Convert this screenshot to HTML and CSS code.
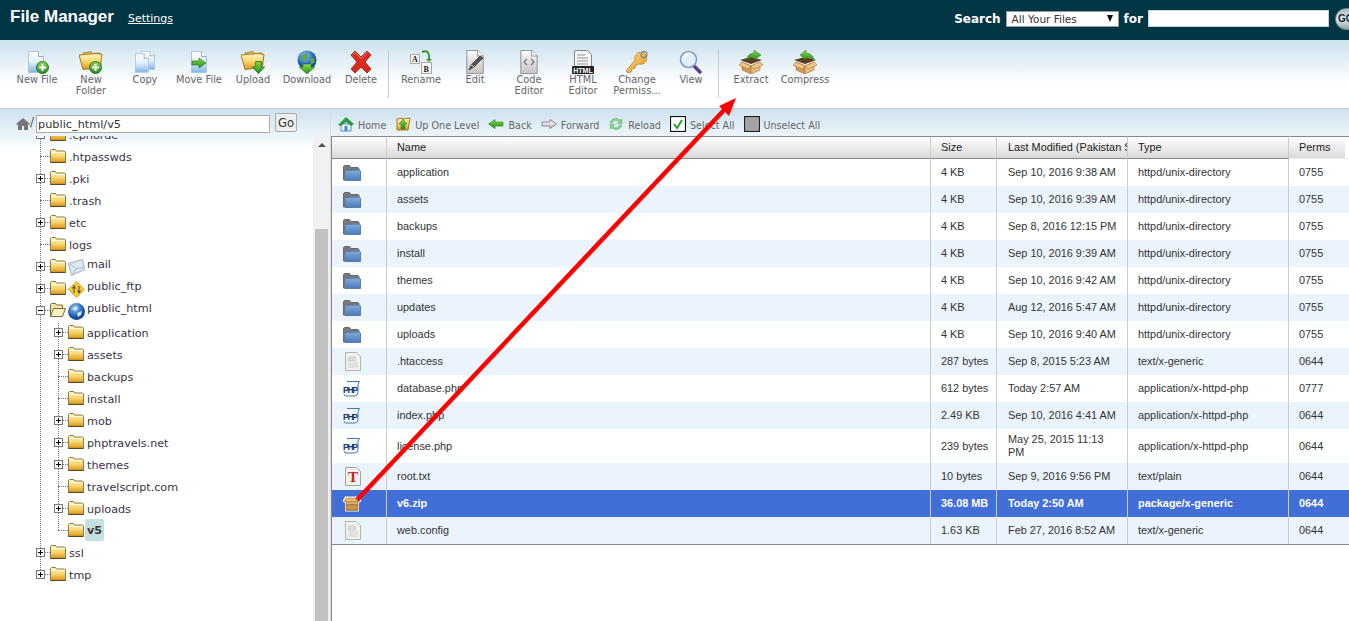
FILE: index.html
```html
<!DOCTYPE html>
<html lang="en">

<head>
    <meta charset="UTF-8">
    <meta name="viewport" content="width=device-width, initial-scale=1.0">
    <title>File Manager</title>
    <link rel="stylesheet" href="styles.css">
</head>

<body>
    <!-- icon sheet -->
    <svg class="defs" width="0" height="0">
        <defs>
            <linearGradient id="gFolder" x1="0" y1="0" x2="0" y2="1"><stop offset="0" stop-color="#fff6c4"/><stop offset=".5" stop-color="#fbd66e"/><stop offset="1" stop-color="#d9951c"/></linearGradient>
            <linearGradient id="gPage" x1="0" y1="0" x2="0" y2="1"><stop offset="0" stop-color="#fff"/><stop offset=".5" stop-color="#e4f0fb"/><stop offset="1" stop-color="#7db4e6"/></linearGradient>
            <linearGradient id="gGrey" x1="0" y1="0" x2="0" y2="1"><stop offset="0" stop-color="#fbfbfb"/><stop offset="1" stop-color="#c4c4c4"/></linearGradient>
            <linearGradient id="gGreen" x1="0" y1="0" x2="0" y2="1"><stop offset="0" stop-color="#8fdc4a"/><stop offset="1" stop-color="#1f8a1f"/></linearGradient>
            <linearGradient id="gBlue" x1="0" y1="0" x2="0" y2="1"><stop offset="0" stop-color="#83acdc"/><stop offset="1" stop-color="#4a7bb8"/></linearGradient>
            <radialGradient id="gGlobe" cx=".4" cy=".3" r=".8"><stop offset="0" stop-color="#9cc8f5"/><stop offset=".6" stop-color="#1f5cb0"/><stop offset="1" stop-color="#0f2f70"/></radialGradient>
            <linearGradient id="gBox" x1="0" y1="0" x2="0" y2="1"><stop offset="0" stop-color="#e8bc7c"/><stop offset="1" stop-color="#b9803c"/></linearGradient>
            <linearGradient id="gKey" x1="0" y1="0" x2="1" y2="1"><stop offset="0" stop-color="#ffe08a"/><stop offset="1" stop-color="#e0901c"/></linearGradient>
        </defs>
        <symbol id="folder" viewBox="0 0 16 14">
            <path d="M.5 13.500V1.500l1-1h4l1 1.500h8l1 1v10.500z" fill="url(#gFolder)" stroke="#8c7a4a"/>
            <path d="M1 3.500h14" stroke="#fff" stroke-opacity=".8"/>
            <path d="M.5 13.500h15" stroke="#5a4a20" stroke-width="1.200"/>
        </symbol>
        <symbol id="folder-open" viewBox="0 0 16 14">
            <path d="M.5 13.500V1.500l1-1h4l1 1.500h6v3" fill="#fbe8a8" stroke="#7a6a3a"/>
            <path d="M.5 13.500l3-8h12l-3 8z" fill="#fdf0c0" stroke="#7a6a3a"/>
        </symbol>
        <symbol id="page" viewBox="0 0 16 22">
            <path d="M.5.500h10l5 5v16H.5z" fill="url(#gPage)" stroke="#a9c4de"/>
            <path d="M10.500.500v5h5" fill="#fff" stroke="#9ab"/>
        </symbol>
        <symbol id="page-grey" viewBox="0 0 16 22">
            <path d="M.5.500h10l5 5v16H.5z" fill="url(#gGrey)" stroke="#999"/>
            <path d="M10.500.500v5h5" fill="#fff" stroke="#999"/>
        </symbol>
        <symbol id="plus-badge" viewBox="0 0 13 13">
            <circle cx="6.500" cy="6.500" r="6" fill="url(#gGreen)" stroke="#2d6b2d"/>
            <path d="M6.500 3v7M3 6.500h7" stroke="#fff" stroke-width="2"/>
        </symbol>
        <symbol id="big-folder" viewBox="0 0 24 20">
            <path d="M4 2l8-1.500 1 2 8-.5 1 12-15 3z" fill="#e9c25a" stroke="#a88a3a"/>
            <path d="M0 4l17-1.500 6 1-2 13-17 2z" fill="url(#gFolder)" stroke="#a07a24"/>
        </symbol>
        <symbol id="down-arrow" viewBox="0 0 14 14">
            <path d="M4 .5h6v6h3.500L7 13.500.5 6.500H4z" fill="url(#gGreen)" stroke="#2a7a1f"/>
        </symbol>
        <symbol id="box" viewBox="0 0 24 18">
            <path d="M1 4l11 4 11-4-11-3z" fill="#5e3c1c"/>
            <path d="M3 6l9 4v8l-9-4z" fill="#d19a55" stroke="#a87434" stroke-width=".6"/>
            <path d="M21 6l-9 4v8l9-4z" fill="#e8bc7c" stroke="#a87434" stroke-width=".6"/>
            <path d="M3 6L0 9l9 4 3-3zM21 6l3 3-9 4-3-3z" fill="#edc78c" stroke="#a87434" stroke-width=".6"/>
        </symbol>
        <symbol id="blue-folder" viewBox="0 0 18 16">
            <path d="M.5 15V1.500l1-1h5l1.500 2h7l1 1V15z" fill="#77797d" stroke="#66686c"/>
            <path d="M2 15.500V5.500l14-.500 1.500 1v9.500z" fill="url(#gBlue)" stroke="#5a7ea8"/>
        </symbol>
        <symbol id="doc" viewBox="0 0 16 19">
            <path d="M.5.500h11l4 4v14H.5z" fill="#f1f1ee" stroke="#b5b5b0"/>
            <path d="M3.500 5h7v4h-7zM3 11h10M3 13h10M3 15h10" fill="#dcdcd8" stroke="#cfcfca"/>
        </symbol>
        <symbol id="php-scroll" viewBox="0 0 17 16">
            <path d="M4 .500h12.500l-1.500 3v8q0 3-3 3.500H3q-2 0-2-2" fill="#f4f8fd" stroke="#3f78b8"/>
        </symbol>
    </svg>

    <header class="topbar">
        <h1 class="app-title">File Manager</h1>
        <a class="settings-link" href="#">Settings</a>
        <form class="search">
            <label class="search-label">Search</label>
            <div class="fake-select"><span>All Your Files</span><span class="select-arrow"></span></div>
            <label class="search-label for-label">for</label>
            <input class="search-input" type="text">
            <button class="go-round" type="button">GO</button>
        </form>
    </header>

    <nav class="toolbar">
        <a class="tool"><svg class="tool-icon" viewBox="0 0 24 24"><use href="#page" x="3" y="1" width="16" height="22"/><use href="#plus-badge" x="11" y="11" width="13" height="13"/></svg>New File</a>
        <a class="tool"><svg class="tool-icon" viewBox="0 0 24 24"><use href="#big-folder" x="0" y="1" width="24" height="20"/><use href="#plus-badge" x="10" y="11" width="13" height="13"/></svg>New Folder</a>
        <a class="tool"><svg class="tool-icon" viewBox="0 0 24 24"><use href="#page" x="8" y="1" width="14" height="19"/><use href="#page" x="2" y="3" width="14" height="20"/></svg>Copy</a>
        <a class="tool"><svg class="tool-icon" viewBox="0 0 24 24"><use href="#page" x="3" y="1" width="18" height="22"/><path d="M5 11h7V8l7 5-7 5v-3H5z" fill="url(#gGreen)" stroke="#2a7a1f" stroke-width=".7"/></svg>Move File</a>
        <a class="tool"><svg class="tool-icon" viewBox="0 0 24 24"><use href="#big-folder" x="0" y="1" width="24" height="20"/><use href="#down-arrow" x="11" y="11" width="13" height="13"/></svg>Upload</a>
        <a class="tool"><svg class="tool-icon" viewBox="0 0 24 24"><circle cx="12" cy="10" r="9.500" fill="url(#gGlobe)"/><path d="M6 6l5-3 3 3-2 4-4 1zM15 9l4-1 1 4-4 3z" fill="#58a850"/><path d="M8 14h8v3h4l-8 7-8-7h4z" fill="url(#gGreen)" stroke="#1f6a1f" stroke-width=".5"/></svg>Download</a>
        <a class="tool"><svg class="tool-icon" viewBox="0 0 24 24"><path d="M2 5l4-4 6 6 6-6 4 4-6 7 6 7-4 4-6-6-6 6-4-4 6-7z" fill="#dd2a1c" stroke="#8f2018" stroke-width=".8"/><path d="M3.500 5L6 2.500l6 6 6-6" fill="none" stroke="#f4857a"/></svg>Delete</a>
        <span class="tool-sep"></span>
        <a class="tool"><svg class="tool-icon" viewBox="0 0 24 24"><rect x="1.500" y="4.500" width="9" height="9" fill="#f6f6f6" stroke="#aaa"/><text x="3" y="12" class="card-text">A</text><rect x="12.500" y="12.500" width="10" height="11" fill="#f6f6f6" stroke="#aaa"/><text x="14.500" y="21.500" class="card-text">B</text><path d="M13 2c5-2 8 0 7 9" fill="none" stroke="#2f9a2f" stroke-width="2"/><path d="M17 9h6l-3 3z" fill="#2f9a2f"/></svg>Rename</a>
        <a class="tool"><svg class="tool-icon" viewBox="0 0 24 24"><use href="#page-grey" x="3" y="0" width="18" height="24"/><path d="M6 20l2-5L17 6l3 2-9 9z" fill="#555" stroke="#222" stroke-width=".6"/><path d="M8 15l3 2" stroke="#ddd"/></svg>Edit</a>
        <a class="tool"><svg class="tool-icon" viewBox="0 0 24 24"><use href="#page-grey" x="3" y="0" width="18" height="24"/><path d="M10 9l-3 3 3 3M14 9l3 3-3 3" fill="none" stroke="#777" stroke-width="1.200"/></svg>Code Editor</a>
        <a class="tool"><svg class="tool-icon" viewBox="0 0 24 24"><path d="M3.500.500h13l4 4v14h-17z" fill="#f4f4f4" stroke="#888"/><path d="M6 5h8M6 8h11M6 11h11M6 14h11" stroke="#999"/><rect x="1" y="16" width="22" height="8" rx="1" fill="#222"/><text x="12" y="22.500" class="html-text">HTML</text></svg>HTML Editor</a>
        <a class="tool"><svg class="tool-icon" viewBox="0 0 24 24"><path d="M1 21l2 2 3-1 1-3 3-1 1-3 3-1a6 6 0 1 0-4-4z" fill="url(#gKey)" stroke="#b9781c" stroke-width=".7"/><circle cx="19" cy="4.500" r="3" fill="none" stroke="#888" stroke-width="1.300"/></svg>Change Permiss...</a>
        <a class="tool"><svg class="tool-icon" viewBox="0 0 24 24"><path d="M14 15l7 7" stroke="#5a3d9a" stroke-width="3.500" stroke-linecap="round"/><circle cx="9.500" cy="9.500" r="8" fill="#e4eefb" stroke="#7f9fc8" stroke-width="1.600"/><path d="M5 8a5 5 0 0 1 5-4" fill="none" stroke="#fff" stroke-width="2"/></svg>View</a>
        <span class="tool-sep"></span>
        <a class="tool"><svg class="tool-icon" viewBox="0 0 24 24"><use href="#box" x="0" y="6" width="24" height="18"/><path d="M8 10c0-5 4-7 7-7V0l7 5-7 5V7c-3 0-5 1-7 3z" fill="url(#gGreen)" stroke="#1f7a1f" stroke-width=".5"/></svg>Extract</a>
        <a class="tool"><svg class="tool-icon" viewBox="0 0 24 24"><use href="#box" x="0" y="6" width="24" height="18"/><path d="M21 11c0-5-4-8-8-8V0L7 5l6 5V7c3 0 6 1 8 4z" fill="url(#gGreen)" stroke="#1f7a1f" stroke-width=".5"/></svg>Compress</a>
    </nav>

    <main class="main">
        <aside class="sidebar">
            <div class="path-bar">
                <svg class="path-home" viewBox="0 0 14 14"><path d="M7 1L0 7l1 1 1-1v6h4V9h2v4h4V7l1 1 1-1z" fill="#777"/></svg>
                <span class="path-slash">/</span>
                <input class="path-input" type="text" value="public_html/v5">
                <button class="path-go" type="button">Go</button>
            </div>
            <div class="tree-pane">
                <div class="tree-scroll">
                    <div class="tree tree-root">
                        <div class="row"><i class="exp minus"></i><i class="twig short"></i><svg class="fld"><use href="#folder"/></svg><a class="lbl">.cphorde</a></div>
                        <div class="row"><i class="twig"></i><svg class="fld"><use href="#folder"/></svg><a class="lbl">.htpasswds</a></div>
                        <div class="row"><i class="exp plus"></i><i class="twig short"></i><svg class="fld"><use href="#folder"/></svg><a class="lbl">.pki</a></div>
                        <div class="row"><i class="twig"></i><svg class="fld"><use href="#folder"/></svg><a class="lbl">.trash</a></div>
                        <div class="row"><i class="exp plus"></i><i class="twig short"></i><svg class="fld"><use href="#folder"/></svg><a class="lbl">etc</a></div>
                        <div class="row"><i class="twig"></i><svg class="fld"><use href="#folder"/></svg><a class="lbl">logs</a></div>
                        <div class="row"><i class="exp plus"></i><i class="twig short"></i><svg class="fld"><use href="#folder"/></svg>
                            <svg class="badge" viewBox="0 0 17 17"><path d="M.5 4.500l14-4 2 10-13 6z" fill="#dfe8f2" stroke="#9fb2c8"/><path d="M.5 4.500l8 5 8-1M3.500 16.500l5-7" fill="none" stroke="#a8bcd2"/></svg><a class="lbl lbl-up">mail</a></div>
                        <div class="row"><i class="exp plus"></i><i class="twig short"></i><svg class="fld"><use href="#folder"/></svg>
                            <svg class="badge" viewBox="0 0 17 17"><path d="M8.500.500l8 8-8 8-8-8z" fill="#f7c83a" stroke="#e0a820"/><path d="M6 12V6M4.500 7.500L6 5l1.500 2.500M11 5v6M9.500 9.500L11 12l1.500-2.500" fill="none" stroke="#554" stroke-width="1.100"/></svg><a class="lbl lbl-up">public_ftp</a></div>
                        <div class="row"><i class="exp minus"></i><i class="twig short"></i><svg class="fld"><use href="#folder-open"/></svg>
                            <svg class="badge" viewBox="0 0 17 17"><circle cx="8.500" cy="8.500" r="8.500" fill="url(#gGlobe)"/><path d="M4 6l4-3 2 2-2 3zM9 10l5-2-1 4-3 2z" fill="#cfe2f6"/></svg><a class="lbl lbl-up">public_html</a></div>
                        <div class="tree tree-sub">
                            <div class="row"><i class="exp plus"></i><i class="twig short"></i><svg class="fld"><use href="#folder"/></svg><a class="lbl">application</a></div>
                            <div class="row"><i class="exp plus"></i><i class="twig short"></i><svg class="fld"><use href="#folder"/></svg><a class="lbl">assets</a></div>
                            <div class="row"><i class="twig"></i><svg class="fld"><use href="#folder"/></svg><a class="lbl">backups</a></div>
                            <div class="row"><i class="twig"></i><svg class="fld"><use href="#folder"/></svg><a class="lbl">install</a></div>
                            <div class="row"><i class="exp plus"></i><i class="twig short"></i><svg class="fld"><use href="#folder"/></svg><a class="lbl">mob</a></div>
                            <div class="row"><i class="exp plus"></i><i class="twig short"></i><svg class="fld"><use href="#folder"/></svg><a class="lbl">phptravels.net</a></div>
                            <div class="row"><i class="exp plus"></i><i class="twig short"></i><svg class="fld"><use href="#folder"/></svg><a class="lbl">themes</a></div>
                            <div class="row"><i class="twig"></i><svg class="fld"><use href="#folder"/></svg><a class="lbl">travelscript.com</a></div>
                            <div class="row"><i class="exp plus"></i><i class="twig short"></i><svg class="fld"><use href="#folder"/></svg><a class="lbl">uploads</a></div>
                            <div class="row"><i class="twig"></i><svg class="fld"><use href="#folder"/></svg><a class="lbl lbl-current">v5</a></div>
                        </div>
                        <div class="row"><i class="exp plus"></i><i class="twig short"></i><svg class="fld"><use href="#folder"/></svg><a class="lbl">ssl</a></div>
                        <div class="row"><i class="exp plus"></i><i class="twig short"></i><svg class="fld"><use href="#folder"/></svg><a class="lbl">tmp</a></div>
                    </div>
                </div>
                <div class="scrollbar">
                    <span class="scroll-up"></span>
                    <span class="scroll-thumb"></span>
                </div>
            </div>
        </aside>

        <section class="content">
            <div class="nav-bar">
                <a class="nav-item"><svg class="nav-icon" viewBox="0 0 16 16"><path d="M3 8v7h10V8z" fill="#eaf4fc" stroke="#5b93c9"/><rect x="6.500" y="10" width="3" height="5" fill="#3f8ad0"/><path d="M0 9l8-8 8 7-3 2-5-4-5 4z" fill="#2f9a3f"/></svg>Home</a>
                <a class="nav-item"><svg class="nav-icon" viewBox="0 0 16 16"><path d="M2 3l5-1 1 1 7-1-2 12H2z" fill="url(#gFolder)" stroke="#a07a24"/><path d="M6 13V8H4l4-5 4 5h-2v5z" fill="url(#gGreen)" stroke="#2a7a1f" stroke-width=".5"/></svg>Up One Level</a>
                <a class="nav-item"><svg class="nav-icon" viewBox="0 0 16 16"><path d="M.5 8L7 3.500V6h8v4H7v2.500z" fill="url(#gGreen)" stroke="#3a8a1f" stroke-width=".7"/></svg>Back</a>
                <a class="nav-item"><svg class="nav-icon" viewBox="0 0 16 16"><path d="M15.500 8L9 3.500V6H1v4h8v2.500z" fill="url(#gGrey)" stroke="#777" stroke-width=".8"/></svg>Forward</a>
                <a class="nav-item"><svg class="nav-icon" viewBox="0 0 16 16"><path d="M2 7a6 6 0 0 1 10-3l2-1v5H9l2-2a4 4 0 0 0-7 1zM14 9a6 6 0 0 1-10 3l-2 1V8h5l-2 2a4 4 0 0 0 7-1z" fill="#86d08c" stroke="#5fae68" stroke-width=".4"/></svg>Reload</a>
                <a class="nav-item"><svg class="nav-icon" viewBox="0 0 16 16"><rect x=".5" y=".5" width="15" height="15" fill="#fff" stroke="#111" stroke-width="1.200"/><path d="M4 8l3 4 5-8" fill="none" stroke="#2aa02a" stroke-width="2"/></svg>Select All</a>
                <a class="nav-item"><svg class="nav-icon" viewBox="0 0 16 16"><rect x=".5" y=".5" width="15" height="15" fill="#a3a3a3" stroke="#222" stroke-width="1.200"/></svg>Unselect All</a>
            </div>
            <div class="table-wrap">
                <table class="files">
                    <colgroup><col class="c-icon"><col class="c-name"><col class="c-size"><col class="c-date"><col class="c-type"><col class="c-perm"></colgroup>
                    <thead>
                        <tr><th></th><th>Name</th><th>Size</th><th class="th-date"><div class="clip">Last Modified (Pakistan Standard Time)</div></th><th>Type</th><th class="th-perm">Perms</th></tr>
                    </thead>
                    <tbody>
                        <tr><td><svg class="f-folder"><use href="#blue-folder"/></svg></td><td>application</td><td>4 KB</td><td>Sep 10, 2016 9:38 AM</td><td>httpd/unix-directory</td><td>0755</td></tr>
                        <tr><td><svg class="f-folder"><use href="#blue-folder"/></svg></td><td>assets</td><td>4 KB</td><td>Sep 10, 2016 9:39 AM</td><td>httpd/unix-directory</td><td>0755</td></tr>
                        <tr><td><svg class="f-folder"><use href="#blue-folder"/></svg></td><td>backups</td><td>4 KB</td><td>Sep 8, 2016 12:15 PM</td><td>httpd/unix-directory</td><td>0755</td></tr>
                        <tr><td><svg class="f-folder"><use href="#blue-folder"/></svg></td><td>install</td><td>4 KB</td><td>Sep 10, 2016 9:39 AM</td><td>httpd/unix-directory</td><td>0755</td></tr>
                        <tr><td><svg class="f-folder"><use href="#blue-folder"/></svg></td><td>themes</td><td>4 KB</td><td>Sep 10, 2016 9:42 AM</td><td>httpd/unix-directory</td><td>0755</td></tr>
                        <tr><td><svg class="f-folder"><use href="#blue-folder"/></svg></td><td>updates</td><td>4 KB</td><td>Aug 12, 2016 5:47 AM</td><td>httpd/unix-directory</td><td>0755</td></tr>
                        <tr><td><svg class="f-folder"><use href="#blue-folder"/></svg></td><td>uploads</td><td>4 KB</td><td>Sep 10, 2016 9:40 AM</td><td>httpd/unix-directory</td><td>0755</td></tr>
                        <tr><td><svg class="f-doc"><use href="#doc"/></svg></td><td>.htaccess</td><td>287 bytes</td><td>Sep 8, 2015 5:23 AM</td><td>text/x-generic</td><td>0644</td></tr>
                        <tr><td><svg class="f-php" viewBox="0 0 17 16"><use href="#php-scroll"/><text x="0" y="11.500" class="php-text" textLength="15">PHP</text></svg></td><td>database.php</td><td>612 bytes</td><td>Today 2:57 AM</td><td>application/x-httpd-php</td><td>0777</td></tr>
                        <tr><td><svg class="f-php" viewBox="0 0 17 16"><use href="#php-scroll"/><text x="0" y="11.500" class="php-text" textLength="15">PHP</text></svg></td><td>index.php</td><td>2.49 KB</td><td>Sep 10, 2016 4:41 AM</td><td>application/x-httpd-php</td><td>0644</td></tr>
                        <tr><td><svg class="f-php" viewBox="0 0 17 16"><use href="#php-scroll"/><text x="0" y="11.500" class="php-text" textLength="15">PHP</text></svg></td><td>license.php</td><td>239 bytes</td><td>May 25, 2015 11:13 PM</td><td>application/x-httpd-php</td><td>0644</td></tr>
                        <tr><td><svg class="f-doc" viewBox="0 0 16 19"><path d="M.5.500h11l4 4v14H.5z" fill="#f1f1ee" stroke="#a5a5a0"/><text x="8" y="15" class="t-text">T</text></svg></td><td>root.txt</td><td>10 bytes</td><td>Sep 9, 2016 9:56 PM</td><td>text/plain</td><td>0644</td></tr>
                        <tr class="selected"><td><svg class="f-pack" viewBox="0 0 20 16"><path d="M.5 5L3 .5h14L19.500 5 17 7v8.500H3V7z" fill="#fff"/><path d="M2 5l2-3h12l2 3-2 1H4z" fill="#e8bb72" stroke="#a87434" stroke-width=".6"/><rect x="4" y="6" width="12" height="8.500" fill="url(#gBox)" stroke="#9a6a2c" stroke-width=".6"/><path d="M4 9h12" stroke="#8a5a20"/></svg></td><td>v6.zip</td><td>36.08 MB</td><td>Today 2:50 AM</td><td>package/x-generic</td><td>0644</td></tr>
                        <tr><td><svg class="f-doc"><use href="#doc"/></svg></td><td>web.config</td><td>1.63 KB</td><td>Feb 27, 2016 8:52 AM</td><td>text/x-generic</td><td>0644</td></tr>
                    </tbody>
                </table>
            </div>
        </section>
    </main>

    <!-- red annotation arrow drawn over the screenshot -->
    <svg class="annotation" viewBox="0 0 1349 621">
        <path d="M357 500L726 108" stroke="#f00" stroke-width="4.500" fill="none"/>
        <path d="M736 98l-17 8 10 10z" fill="#f00"/>
    </svg>
</body>

</html>
```

FILE: styles.css
```css
* {
    box-sizing: border-box;
}

html,
body {
    height: 100%;
}

body {
    margin: 0;
    overflow: hidden;
    display: flex;
    flex-direction: column;
    position: relative;
    background-color: #fff;
    color: #333;
    font-family: "DejaVu Sans", Verdana, sans-serif;
    font-size: 10px;
}

.defs {
    position: absolute;
}

/* top bar */
.topbar {
    flex: none;
    height: 40px;
    display: flex;
    align-items: center;
    padding-left: 10px;
    background-color: #023645;
    color: #fff;
    overflow: hidden;
}

.app-title {
    margin: 0 0 7px;
    font-family: "Liberation Sans", Arial, sans-serif;
    font-size: 17px;
    font-weight: bold;
}

.settings-link {
    margin: 0 0 4px 14px;
    color: #fff;
    font-size: 11px;
    text-decoration: underline;
}

.search {
    margin: 0 -10px 3px auto;
    display: flex;
    align-items: center;
    height: 24px;
}

.search-label {
    font-size: 12px;
    font-weight: bold;
    font-family: "DejaVu Sans", Verdana, sans-serif;
}

.for-label {
    margin: 0 5px;
}

.fake-select {
    width: 113px;
    height: 16px;
    margin-left: 5px;
    padding: 0 5px;
    display: flex;
    align-items: center;
    justify-content: space-between;
    background-color: #fff;
    border: 1px solid #999;
    color: #333;
    font-size: 10.5px;
}

.select-arrow {
    width: 0;
    height: 0;
    border-left: 3.5px solid transparent;
    border-right: 3.5px solid transparent;
    border-top: 7px solid #111;
}

.search-input {
    width: 181px;
    height: 17px;
    padding: 0;
    background-color: #fff;
    border: 1px solid #c8d4da;
}

.go-round {
    width: 24px;
    height: 22px;
    margin-left: 6px;
    padding: 0 0 0 2px;
    text-align: left;
    border: 1px solid #6f8a92;
    border-radius: 11px;
    background: linear-gradient(#a9bcc0, #e4ecec 50%, #8fa5aa);
    color: #123;
    font-size: 10px;
    font-weight: bold;
    font-family: "Liberation Sans", Arial, sans-serif;
}

/* toolbar */
.toolbar {
    flex: none;
    height: 69px;
    padding: 10px 0 0 10px;
    display: flex;
    align-items: flex-start;
    background: linear-gradient(#cce1ee, #fff 44px);
    border-bottom: 1px solid #c9c9c9;
}

.tool {
    width: 54px;
    padding: 0 2px;
    text-align: center;
    color: #666;
    font-size: 9.8px;
    line-height: 11px;
}

.tool-icon {
    display: block;
    width: 24px;
    height: 24px;
    margin: 0 auto;
}

.tool-sep {
    width: 1px;
    height: 48px;
    margin-right: 5px;
    background-color: #c8c8c8;
}

/* main split */
.main {
    flex: 1;
    min-height: 0;
    display: flex;
}

.sidebar {
    width: 331px;
    flex: none;
    display: flex;
    flex-direction: column;
    background: linear-gradient(#cde2ef, #fff 42px) no-repeat;
    border-right: 1px solid #ddd;
}

.path-bar {
    flex: none;
    height: 27px;
    padding: 4px 0 0 16px;
    display: flex;
    align-items: flex-start;
}

.path-home {
    width: 14px;
    height: 14px;
    margin-top: 4px;
}

.path-slash {
    width: 6px;
    margin-top: 2px;
    color: #555;
    font-size: 12px;
}

.path-input {
    width: 234px;
    height: 18px;
    margin-top: 2px;
    padding: 0 1px;
    border: 1px solid #aaa;
    background-color: #fff;
    color: #333;
    font-family: "DejaVu Sans", Verdana, sans-serif;
    font-size: 11.3px;
}

.path-go {
    width: 22px;
    height: 19px;
    margin-left: 5px;
    padding: 0;
    border: 1px solid #aaa;
    border-radius: 2px;
    background-color: #eee;
    color: #333;
    font-family: "DejaVu Sans", Verdana, sans-serif;
    font-size: 11.5px;
}

.tree-pane {
    flex: 1;
    min-height: 0;
    display: flex;
}

.tree-scroll {
    flex: 1;
    overflow: hidden;
}

.tree {
    position: relative;
    font-size: 11.2px;
}

/* dotted guide, ends on the middle of the last row */
.tree::before {
    content: "";
    position: absolute;
    left: 0;
    top: 0;
    bottom: 11px;
    border-left: 1px dotted #777;
}

.tree-root {
    margin: -13px 0 0 40px;
}

.tree-sub {
    margin-left: 18px;
}

.tree-sub::before {
    top: 2px;
}

.row {
    position: relative;
    height: 22px;
    display: flex;
    align-items: center;
}

.exp {
    position: relative;
    flex: none;
    width: 9px;
    height: 9px;
    margin-left: -4px;
    border: 1px solid #777;
    background: linear-gradient(#000, #000) center / 5px 1px no-repeat #fff;
}

.exp.plus {
    background: linear-gradient(#000, #000) center / 5px 1px no-repeat,
        linear-gradient(#000, #000) center / 1px 5px no-repeat,
        #fff;
}

.twig {
    flex: none;
    width: 10px;
    border-top: 1px dotted #777;
}

.twig.short {
    width: 5px;
}

.fld {
    flex: none;
    width: 16px;
    height: 14px;
}

.badge {
    flex: none;
    width: 17px;
    height: 17px;
    margin-left: 2px;
    margin-top: 2px;
}

.lbl {
    margin-left: 3px;
    margin-top: 2px;
    color: #3a3344;
    white-space: nowrap;
}

.lbl-up {
    margin-left: 2px;
    margin-top: -4px;
}

.lbl-current {
    margin-left: 1px;
    margin-top: 0;
    padding: 0 2px;
    height: 22px;
    line-height: 23px;
    border-radius: 2px;
    background-color: #c1e0de;
    font-weight: bold;
}

.scrollbar {
    flex: none;
    width: 17px;
    display: flex;
    flex-direction: column;
    background-color: #f1f1f1;
}

.scroll-up {
    flex: none;
    align-self: center;
    width: 0;
    height: 0;
    margin-top: 7px;
    border-left: 4px solid transparent;
    border-right: 4px solid transparent;
    border-bottom: 4px solid #505050;
}

.scroll-thumb {
    flex: 1;
    margin: 82px 2px 0;
    background-color: #c1c1c1;
}

/* right side */
.content {
    flex: 1;
    min-width: 0;
    display: flex;
    flex-direction: column;
    background: linear-gradient(#cde2ef, #fff 42px) no-repeat;
}

.nav-bar {
    flex: none;
    height: 27px;
    padding: 8px 0 0 7px;
    display: flex;
    align-items: flex-start;
}

.nav-item {
    margin-right: 9px;
    display: flex;
    align-items: center;
    gap: 4px;
    height: 16px;
    color: #666;
    font-size: 9.6px;
    white-space: nowrap;
}

.nav-icon {
    width: 16px;
    height: 16px;
    flex: none;
    margin-top: -2px;
}

.table-wrap {
    flex: 1;
    min-height: 0;
    background-color: #fff;
    border-left: 1px solid #888;
}

.files {
    width: 1017px;
    table-layout: fixed;
    border-collapse: separate;
    border-spacing: 0;
    font-family: "Liberation Sans", Arial, sans-serif;
    font-size: 10.9px;
    color: #333;
    border-bottom: 1px solid #888;
}

.c-icon { width: 55px; }
.c-name { width: 544px; }
.c-size { width: 66px; }
.c-date { width: 131px; }
.c-type { width: 161px; }
.c-perm { width: 60px; }

.files th {
    height: 23px;
    padding: 0 0 2px 10px;
    text-align: left;
    font-weight: normal;
    color: #222;
    border-top: 1px solid #888;
    border-bottom: 1px solid #888;
    border-right: 1px solid #ccc;
    background: linear-gradient(#fff, #e9e9e9 60%, #d9d9d9);
}

.files th.th-date {
    padding-left: 11px;
}

.files th.th-perm {
    border-right: none;
    border-bottom-color: #eee;
    background-size: 56px 100%;
    background-repeat: no-repeat;
}

.clip {
    overflow: hidden;
    white-space: nowrap;
}

.files td {
    height: 27px;
    padding: 4px 0 4px 10px;
    line-height: 13px;
    border-right: 1px solid #ccc;
    vertical-align: middle;
}

.files td:nth-child(4) {
    padding: 4px 8px 4px 11px;
}

.files td:last-child {
    border-right: none;
}

.files tbody tr:nth-child(even) td {
    background-color: #ebf3fd;
}

.files tr.selected td {
    background-color: #426ed8;
    color: #fff;
    font-weight: bold;
}

.files svg {
    display: block;
}

.f-folder {
    width: 18px;
    height: 16px;
    margin: 1px 0 0 1px;
}

.f-doc {
    width: 16px;
    height: 19px;
    margin-left: 3px;
}

.f-php {
    width: 17px;
    height: 16px;
    margin-left: 1px;
}

.f-pack {
    width: 20px;
    height: 16px;
}

.php-text {
    font: bold 8.5px "Liberation Sans", Arial, sans-serif;
    fill: #14366e;
}

.t-text {
    font: bold 15px "Liberation Serif", "Times New Roman", serif;
    fill: #c62418;
    text-anchor: middle;
}

.card-text {
    font: bold 8px "Liberation Serif", "Times New Roman", serif;
    fill: #222;
}

.html-text {
    font: bold 7px "Liberation Sans", Arial, sans-serif;
    fill: #fff;
    text-anchor: middle;
}

/* red arrow lies over the whole page */
.annotation {
    position: absolute;
    left: 0;
    top: 0;
    width: 1349px;
    height: 621px;
    pointer-events: none;
}
```
